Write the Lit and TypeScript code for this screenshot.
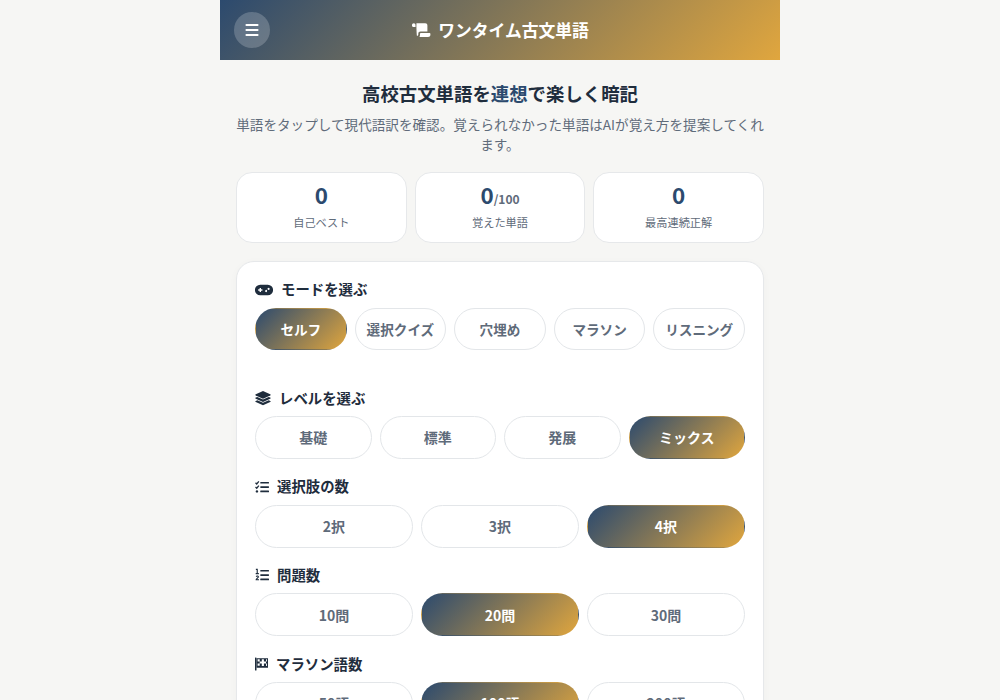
import { LitElement, html, css, svg } from "lit";
import { customElement } from "lit/decorators.js";

const icons = {
  bars: svg`<svg class="ic" width="14" height="16" viewBox="0 0 14 16" fill="currentColor"><rect x="0.5" y="2" width="13" height="2" rx=".8"/><rect x="0.5" y="7" width="13" height="2" rx=".8"/><rect x="0.5" y="12" width="13" height="2" rx=".8"/></svg>`,
  scroll: svg`<svg class="ic" width="20" height="16" viewBox="0 0 20 16" fill="currentColor"><path d="M1 3.2C1 2 1.8 1.3 2.8 1.3S4.5 2 4.5 3.2V5H2.2C1.5 5 1 4.4 1 3.8Z"/><path d="M5.4 1.3H14.2C15.6 1.3 16.4 2.2 16.4 3.4V9.5H9.6C8.2 9.5 7.3 10.4 7.3 11.7V12.6C7.3 13.4 6.7 14 6 14C5.7 12 5.4 6 5.4 3.2C5.4 2.4 5.6 1.8 5.4 1.3Z"/><path d="M8.4 15C8.9 14.5 9 13.6 9 12.7V11.7C9 11.2 9.4 10.9 9.8 10.9H18.6C19 10.9 19.4 11.3 19.4 11.8V12.7C19.4 14 18.4 15 17.1 15Z"/></svg>`,
  gamepad: svg`<svg class="ic" width="18" height="14" viewBox="0 0 18 14" fill="currentColor"><path fill-rule="evenodd" d="M5.2 1.7H12.8A5.3 5.3 0 0 1 12.8 12.3H5.2A5.3 5.3 0 0 1 5.2 1.7ZM4.6 4.9V6.3H3.2V7.7H4.6V9.1H6V7.7H7.4V6.3H6V4.9ZM12.1 7.9A1 1 0 1 0 12.1 8.1ZM14.6 5.7A1 1 0 1 0 14.6 5.9Z"/></svg>`,
  layers: svg`<svg class="ic" width="16" height="16" viewBox="0 0 16 16" fill="currentColor"><path d="M8 .9 15.2 4.2C15.8 4.5 15.8 5.2 15.2 5.5L8 8.8.8 5.5C.2 5.2.2 4.5.8 4.2Z"/><path d="M2.3 6.9 8 9.5 13.7 6.9 15.2 7.6C15.8 7.9 15.8 8.5 15.2 8.8L8 12.1.8 8.8C.2 8.5.2 7.9.8 7.6Z"/><path d="M2.3 10.2 8 12.8 13.7 10.2 15.2 10.9C15.8 11.2 15.8 11.8 15.2 12.1L8 15.2.8 12.1C.2 11.8.2 11.2.8 10.9Z"/></svg>`,
  check: svg`<svg class="ic" width="14" height="14" viewBox="0 0 16 16" fill="currentColor"><path d="M.6 3.2 2 4.6 4.4 1.6" fill="none" stroke="currentColor" stroke-width="1.5"/><path d="M.6 8 2 9.4 4.4 6.4" fill="none" stroke="currentColor" stroke-width="1.5"/><circle cx="2.2" cy="13" r="1.4"/><rect x="6" y="2.2" width="10" height="1.9" rx=".6"/><rect x="6" y="7.1" width="10" height="1.9" rx=".6"/><rect x="6" y="12" width="10" height="1.9" rx=".6"/></svg>`,
  ol: svg`<svg class="ic" width="14" height="14" viewBox="0 0 16 16" fill="currentColor"><path d="M1 .9H3.2V5.8H4.4V7H.8V5.8H1.9V2.2H1Z"/><path d="M.8 9.8C1.1 8.9 1.9 8.5 2.7 8.5 3.8 8.5 4.5 9.2 4.5 10.1 4.5 11.3 3.2 12 2.6 12.8H4.6V14.1H.7V13C1.6 11.7 3.1 10.9 3.1 10.1 3.1 9.8 2.9 9.7 2.6 9.7 2.3 9.7 2.1 9.9 2 10.3Z"/><rect x="6" y="2.2" width="10" height="1.9" rx=".6"/><rect x="6" y="7.1" width="10" height="1.9" rx=".6"/><rect x="6" y="12" width="10" height="1.9" rx=".6"/></svg>`,
  flag: svg`<svg class="ic" width="13" height="14" viewBox="0 0 13 14" fill="currentColor"><rect x="0" y="0.5" width="1.5" height="13" rx=".5"/><path fill-rule="evenodd" d="M1.5 1.2H13V10.8H1.5ZM2.6 2.3V4.4H4.7V6.5H2.6V8.7H4.7V6.5H6.8V8.9H8.9V6.5H11V8.9H11.9V6.5H11V4.4H11.9V2.3H11V4.4H8.9V2.3H6.8V4.4H4.7V2.3Z"/></svg>`,
};

type Row = { icon: unknown; title: string; opts: string[]; active: number };

@customElement("app-root")
export class AppRoot extends LitElement {
  static styles = css`
    :host {
      display: block;
      min-height: 700px;
      background: #f6f6f4;
      font-family: "Noto Sans CJK JP", "Noto Sans", sans-serif;
      color: #1f2d3d;
    }
    .shell { width: 560px; margin: 0 auto; }
    header {
      height: 60px;
      background: linear-gradient(135deg, #2c4a6e, #e0a63e);
      display: flex;
      align-items: center;
      justify-content: center;
      position: relative;
      color: #fff;
    }
    .menu {
      position: absolute;
      left: 14px;
      top: 12px;
      width: 36px;
      height: 36px;
      border-radius: 50%;
      background: rgba(255, 255, 255, 0.2);
      display: flex;
      align-items: center;
      justify-content: center;
      color: #fff;
    }
    .brand {
      display: flex;
      align-items: center;
      gap: 7px;
      font-size: 16.8px;
      font-weight: 700;
      line-height: 24px;
    }
    .ic { display: block; flex: none; }
    main { padding: 19px 16px 20px; }
    .intro { text-align: center; margin-bottom: 17px; }
    h1 {
      margin: 0 0 7px;
      font-size: 18.4px;
      line-height: 28px;
      font-weight: 700;
      color: #1f2d3d;
    }
    h1 em { font-style: normal; color: #2c4a6e; }
    .intro p {
      margin: 0;
      font-size: 13.6px;
      line-height: 20.4px;
      color: #5f6b7a;
    }
    .stats { display: grid; grid-template-columns: repeat(3, 1fr); gap: 8px; margin-bottom: 18px; }
    .stat {
      background: #fff;
      border: 1px solid #e6e8ea;
      border-radius: 16px;
      height: 71px;
      box-sizing: border-box;
      text-align: center;
      padding-top: 6px;
    }
    .num { font-size: 22.4px; line-height: 30px; height: 30px; font-weight: 700; color: #2c4a6e; }
    .num small { font-size: 12px; line-height: 1; color: #5f6b7a; font-weight: 700; }
    .lab { font-size: 11.2px; line-height: 18px; color: #5f6b7a; margin-top: 4px; }
    .card {
      background: #fff;
      border: 1px solid #e6e8ea;
      border-radius: 18px;
      padding: 18px;
      box-shadow: 0 2px 8px rgba(0, 0, 0, 0.03);
    }
    .head {
      display: flex;
      align-items: center;
      gap: 8px;
      height: 18.6px;
      font-size: 14.4px;
      font-weight: 700;
      color: #1f2d3d;
      margin-bottom: 9.4px;
    }
    .head .ic { margin-top: 2px; }
    .mode .head { height: 18px; margin-bottom: 10px; }
    .sec { margin-bottom: 17.6px; }
    .sec.mode { margin-bottom: 38.2px; }
    .row { display: grid; gap: 8px; }
    .pill {
      height: 43px;
      box-sizing: border-box;
      border: 1px solid #e3e6e9;
      border-radius: 22px;
      background: #fff;
      display: flex;
      align-items: center;
      justify-content: center;
      font-size: 14px;
      font-weight: 700;
      color: #5f6b7a;
      white-space: nowrap;
    }
    .mode .pill { height: 42px; font-size: 13.6px; }
    .pill.on {
      background: linear-gradient(135deg, #2c4a6e, #e0a63e);
      color: #fff;
      border-color: transparent;
    }
  `;

  private rows: Row[] = [
    { icon: icons.gamepad, title: "モードを選ぶ", opts: ["セルフ", "選択クイズ", "穴埋め", "マラソン", "リスニング"], active: 0 },
    { icon: icons.layers, title: "レベルを選ぶ", opts: ["基礎", "標準", "発展", "ミックス"], active: 3 },
    { icon: icons.check, title: "選択肢の数", opts: ["2択", "3択", "4択"], active: 2 },
    { icon: icons.ol, title: "問題数", opts: ["10問", "20問", "30問"], active: 1 },
    { icon: icons.flag, title: "マラソン語数", opts: ["50語", "100語", "200語"], active: 1 },
  ];

  render() {
    return html`<div class="shell">
      <header>
        <div class="menu">${icons.bars}</div>
        <div class="brand">${icons.scroll}<span>ワンタイム古文単語</span></div>
      </header>
      <main>
        <div class="intro">
          <h1>高校古文単語を<em>連想</em>で楽しく暗記</h1>
          <p>単語をタップして現代語訳を確認。覚えられなかった単語はAIが覚え方を提案してくれます。</p>
        </div>
        <div class="stats">
          <div class="stat"><div class="num">0</div><div class="lab">自己ベスト</div></div>
          <div class="stat"><div class="num">0<small>/100</small></div><div class="lab">覚えた単語</div></div>
          <div class="stat"><div class="num">0</div><div class="lab">最高連続正解</div></div>
        </div>
        <div class="card">
          ${this.rows.map(
            (r, i) => html`<div class="sec ${i === 0 ? "mode" : ""}">
              <div class="head">${r.icon}<span>${r.title}</span></div>
              <div class="row" style="grid-template-columns: repeat(${r.opts.length}, 1fr)">
                ${r.opts.map((o, j) => html`<div class="pill ${j === r.active ? "on" : ""}">${o}</div>`)}
              </div>
            </div>`
          )}
        </div>
      </main>
    </div>`;
  }
}
